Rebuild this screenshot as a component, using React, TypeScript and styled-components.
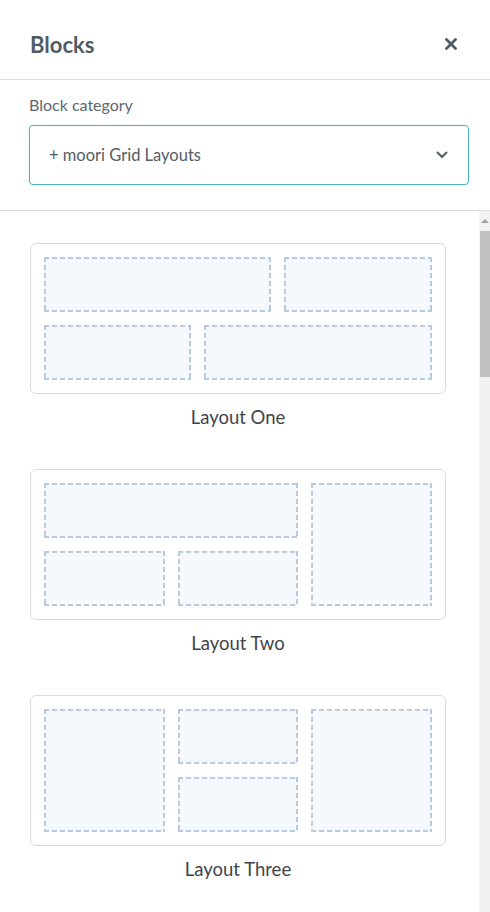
import React from "react";
import styled, { createGlobalStyle } from "styled-components";

const GlobalStyle = createGlobalStyle`
  html, body { margin: 0; padding: 0; background: #ffffff; }
  body { font-family: Lato, "Noto Sans", "Liberation Sans", sans-serif; }
  * { box-sizing: border-box; }
`;

const Panel = styled.div`
  width: 490px;
  height: 912px;
  display: flex;
  flex-direction: column;
  background: #fff;
  overflow: hidden;
`;

const Header = styled.header`
  height: 80px;
  flex: none;
  display: flex;
  align-items: center;
  justify-content: space-between;
  padding: 9px 32px 0 30px;
  border-bottom: 1px solid #dedede;
`;

const Title = styled.h2`
  margin: 0;
  font-size: 22px;
  font-weight: 700;
  color: #4f5b67;
`;

const CloseButton = styled.button`
  border: 0;
  background: transparent;
  padding: 0;
  width: 14px;
  height: 14px;
  display: flex;
  align-items: center;
  justify-content: center;
  color: #4f5b67;
  cursor: pointer;
`;

const CategorySection = styled.section`
  flex: none;
  padding: 14px 21px 25px 29px;
  border-bottom: 1px solid #dedede;
`;

const FieldLabel = styled.label`
  display: block;
  font-size: 16px;
  line-height: 22px;
  color: #5d6872;
  margin-bottom: 9px;
`;

const Select = styled.div`
  height: 60px;
  border: 1px solid #4db4b9;
  border-radius: 4px;
  box-shadow: 0 0 2px rgba(77, 180, 185, 0.35);
  display: flex;
  align-items: center;
  justify-content: space-between;
  padding: 0 20px 0 19px;
  font-size: 16.5px;
  color: #555d66;
`;

const Body = styled.div`
  flex: 1;
  min-height: 0;
  display: flex;
`;

const Viewport = styled.div`
  flex: 1;
  overflow: hidden;
  padding: 32px 33px 0 30px;
`;

const Track = styled.div`
  flex: none;
  width: 11px;
  background: #f1f1f1;
  border-left: 1px solid #f6f6f6;
  display: flex;
  flex-direction: column;
`;

const ArrowUp = styled.div`
  height: 19px;
  display: flex;
  align-items: center;
  justify-content: center;

  &::before {
    content: "";
    width: 0;
    height: 0;
    border-left: 4px solid transparent;
    border-right: 4px solid transparent;
    border-bottom: 4px solid #a3a3a3;
  }
`;

const Thumb = styled.div`
  height: 146px;
  margin-top: 1px;
  background: #c1c1c1;
`;

const List = styled.div`
  display: flex;
  flex-direction: column;
  gap: 40px;
`;

const Item = styled.figure`
  margin: 0;
  display: flex;
  flex-direction: column;
  align-items: stretch;
`;

const Preview = styled.div<{ $cols: string }>`
  border: 1px solid #dcdcdc;
  border-radius: 6px;
  padding: 13px;
  display: grid;
  grid-template-columns: ${(p) => p.$cols};
  grid-template-rows: 55px 55px;
  gap: 13px;
  background: #fff;
`;

const DASH = "#b8cae0";

const Cell = styled.div<{ $col: string; $row: string }>`
  grid-column: ${(p) => p.$col};
  grid-row: ${(p) => p.$row};
  background-color: #f5f8fc;
  background-image:
    repeating-linear-gradient(90deg, ${DASH} 0 5px, transparent 5px 8px),
    repeating-linear-gradient(90deg, ${DASH} 0 5px, transparent 5px 8px),
    repeating-linear-gradient(180deg, ${DASH} 0 5px, transparent 5px 8px),
    repeating-linear-gradient(180deg, ${DASH} 0 5px, transparent 5px 8px);
  background-size: 100% 2px, 100% 2px, 2px 100%, 2px 100%;
  background-position: left top, left bottom, left top, right top;
  background-repeat: no-repeat;
`;

const Caption = styled.figcaption`
  margin-top: 12px;
  text-align: center;
  font-size: 18.5px;
  line-height: 23px;
  color: #3f454b;
`;

type CellDef = { col: string; row: string };
type LayoutDef = { name: string; cols: string; cells: CellDef[] };

const threeCols = "1fr 1fr 1fr";

const layouts: LayoutDef[] = [
  {
    name: "Layout One",
    cols: "147fr 67fr 148fr",
    cells: [
      { col: "1 / 3", row: "1" },
      { col: "3", row: "1" },
      { col: "1", row: "2" },
      { col: "2 / 4", row: "2" },
    ],
  },
  {
    name: "Layout Two",
    cols: threeCols,
    cells: [
      { col: "1 / 3", row: "1" },
      { col: "3", row: "1 / 3" },
      { col: "1", row: "2" },
      { col: "2", row: "2" },
    ],
  },
  {
    name: "Layout Three",
    cols: threeCols,
    cells: [
      { col: "1", row: "1 / 3" },
      { col: "2", row: "1" },
      { col: "2", row: "2" },
      { col: "3", row: "1 / 3" },
    ],
  },
];

const CloseIcon = () => (
  <svg width="12" height="12" viewBox="0 0 12 12" aria-hidden="true">
    <path d="M1.5 1.5 L10.5 10.5 M10.5 1.5 L1.5 10.5" stroke="currentColor" strokeWidth="2.8" strokeLinecap="round" />
  </svg>
);

const ChevronIcon = () => (
  <svg width="12" height="8" viewBox="0 0 12 8" aria-hidden="true">
    <path d="M1.5 1.5 L6 6 L10.5 1.5" stroke="#555d66" strokeWidth="2" fill="none" strokeLinecap="round" strokeLinejoin="round" />
  </svg>
);

export default function App() {
  return (
    <>
      <GlobalStyle />
      <Panel>
        <Header>
          <Title>Blocks</Title>
          <CloseButton aria-label="Close">
            <CloseIcon />
          </CloseButton>
        </Header>
        <CategorySection>
          <FieldLabel>Block category</FieldLabel>
          <Select>
            <span>+ moori Grid Layouts</span>
            <ChevronIcon />
          </Select>
        </CategorySection>
        <Body>
          <Viewport>
            <List>
              {layouts.map((l) => (
                <Item key={l.name}>
                  <Preview $cols={l.cols}>
                    {l.cells.map((c, i) => (
                      <Cell key={i} $col={c.col} $row={c.row} />
                    ))}
                  </Preview>
                  <Caption>{l.name}</Caption>
                </Item>
              ))}
            </List>
          </Viewport>
          <Track aria-hidden="true">
            <ArrowUp />
            <Thumb />
          </Track>
        </Body>
      </Panel>
    </>
  );
}
